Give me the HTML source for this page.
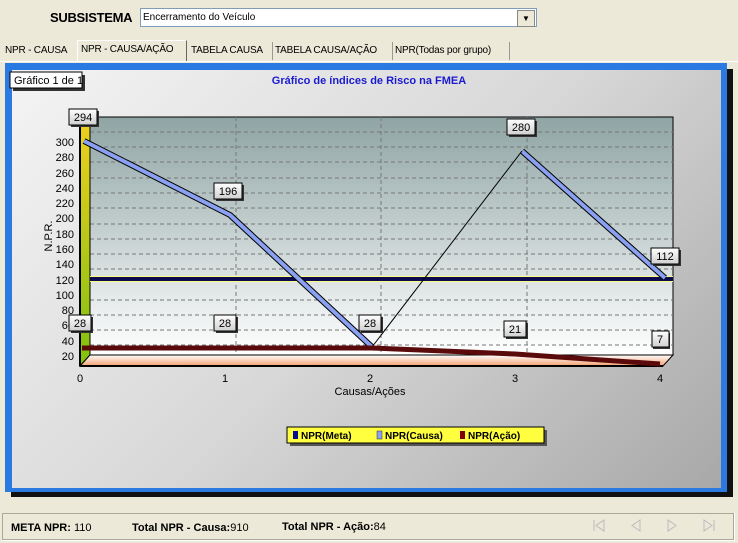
<!DOCTYPE html>
<html><head><meta charset="utf-8"><style>
body{margin:0;width:738px;height:543px;background:#ece9d8;font-family:"Liberation Sans",sans-serif;overflow:hidden;position:relative}
.a{position:absolute}
.tab{position:absolute;top:42px;height:18px;font-size:10px;line-height:18px;padding:0 3px;border-right:1px solid #999;color:#000;white-space:nowrap;overflow:hidden;letter-spacing:-0.2px}
</style></head><body>
<div class="a" style="left:50px;top:10px;font-weight:bold;font-size:13px;letter-spacing:-0.3px">SUBSISTEMA</div>
<div class="a" style="left:140px;top:8px;width:393px;height:17px;background:#fff;border:1px solid #7f9db9;font-size:10px;line-height:17px;padding-left:2px">Encerramento do Veículo</div>
<div class="a" style="left:517px;top:10px;width:16px;height:15px;background:#ece9d8;border:1px solid #888;font-size:8px;text-align:center;line-height:15px">▼</div>
<div class="tab" style="left:2px;width:66px;border:none">NPR - CAUSA</div>
<div class="tab" style="left:77px;top:40px;width:102px;background:#ece9d8;border:1px solid #fff;border-right:1px solid #666;border-bottom:none;height:21px">NPR - CAUSA/AÇÃO</div>
<div class="tab" style="left:188px;width:78px">TABELA CAUSA</div>
<div class="tab" style="left:272px;width:114px">TABELA CAUSA/AÇÃO</div>
<div class="tab" style="left:392px;width:111px">NPR(Todas por grupo)</div>
<div class="a" style="left:0;top:61px;width:738px;height:1px;background:#fff"></div>
<div class="a" style="left:11px;top:69px;width:722px;height:428px;background:#111"></div>
<div class="a" style="left:5px;top:63px;width:722px;height:429px;background:#2a7ae2"></div>
<div class="a" style="left:12px;top:70px;width:709px;height:418px;background:linear-gradient(135deg,#f4f4f4,#d8d8d8 50%,#a8a8a8)"></div>
<svg class="a" style="left:0;top:0" width="738" height="543" font-family="Liberation Sans,sans-serif">
<defs>
<linearGradient id="bw" x1="0" y1="0" x2="0" y2="1"><stop offset="0" stop-color="#8fa4a4"/><stop offset="1" stop-color="#fff"/></linearGradient>
<linearGradient id="fl" x1="0" y1="0" x2="0" y2="1"><stop offset="0" stop-color="#fff"/><stop offset="1" stop-color="#f4a070"/></linearGradient>
<linearGradient id="lw" x1="0" y1="0" x2="0" y2="1"><stop offset="0" stop-color="#f0d020"/><stop offset="1" stop-color="#80c010"/></linearGradient>
<linearGradient id="lb" x1="0" y1="0" x2="0" y2="1"><stop offset="0" stop-color="#fff"/><stop offset="1" stop-color="#d0d0d0"/></linearGradient>
</defs>
<text x="369" y="84" fill="#1a1ad0" font-size="11" font-weight="bold" text-anchor="middle">Gráfico de índices de Risco na FMEA</text>
<rect x="13" y="75" width="72" height="16" fill="#333"/>
<rect x="10" y="72" width="72" height="16" fill="#fff" stroke="#000"/>
<text x="14" y="84" font-size="11">Gráfico 1 de 1</text>
<rect x="90" y="117" width="583" height="238" fill="url(#bw)" stroke="#000"/>
<g stroke="#777" stroke-dasharray="4,3" stroke-width="1">
<line x1="90" y1="132" x2="673" y2="132"/><line x1="90" y1="147" x2="673" y2="147"/><line x1="90" y1="162" x2="673" y2="162"/><line x1="90" y1="178" x2="673" y2="178"/><line x1="90" y1="193" x2="673" y2="193"/><line x1="90" y1="208" x2="673" y2="208"/><line x1="90" y1="224" x2="673" y2="224"/><line x1="90" y1="239" x2="673" y2="239"/><line x1="90" y1="254" x2="673" y2="254"/><line x1="90" y1="269" x2="673" y2="269"/><line x1="90" y1="300" x2="673" y2="300"/><line x1="90" y1="315" x2="673" y2="315"/><line x1="90" y1="330" x2="673" y2="330"/><line x1="90" y1="345" x2="673" y2="345"/>
<line x1="236" y1="117" x2="236" y2="355"/><line x1="381" y1="117" x2="381" y2="355"/><line x1="527" y1="117" x2="527" y2="355"/>
</g>
<polygon points="80,127 90,117 90,355 80,366" fill="url(#lw)" stroke="#000"/>
<polygon points="80,366 90,355 673,355 663,366" fill="url(#fl)" stroke="#000"/>
<line x1="80" y1="366" x2="663" y2="366" stroke="#000" stroke-width="2"/>
<line x1="80" y1="127" x2="80" y2="366" stroke="#000" stroke-width="2"/>
<g font-size="11" text-anchor="end">
<text x="74" y="146">300</text><text x="74" y="161">280</text><text x="74" y="177">260</text><text x="74" y="192">240</text><text x="74" y="207">220</text><text x="74" y="222">200</text><text x="74" y="238">180</text><text x="74" y="253">160</text><text x="74" y="268">140</text><text x="74" y="284">120</text><text x="74" y="299">100</text><text x="74" y="314">80</text><text x="74" y="329">60</text><text x="74" y="345">40</text><text x="74" y="360">20</text>
</g>
<text x="52" y="236" font-size="11" transform="rotate(-90 52 236)" text-anchor="middle">N.P.R.</text>
<g font-size="11" text-anchor="middle"><text x="80" y="382">0</text><text x="225" y="382">1</text><text x="370" y="382">2</text><text x="515" y="382">3</text><text x="660" y="382">4</text><text x="370" y="395">Causas/Ações</text></g>
<line x1="90" y1="279" x2="673" y2="279" stroke="#ffff80" stroke-width="6"/>
<line x1="90" y1="279" x2="673" y2="279" stroke="#0a0a50" stroke-width="4"/>
<g fill="none" stroke-linejoin="bevel">
<polyline points="84,141 230,215 372,347" stroke="#000" stroke-width="6"/>
<polyline points="84,141 230,215 372,347" stroke="#8aa0f0" stroke-width="4"/>
<polyline points="522,151 665,278" stroke="#000" stroke-width="6"/>
<polyline points="522,151 665,278" stroke="#8aa0f0" stroke-width="4"/>
</g>
<line x1="372" y1="347" x2="522" y2="151" stroke="#000" stroke-width="1"/>
<polyline points="82,348 372,348 515,354 660,364" fill="none" stroke="#5a0a0a" stroke-width="5"/>
<g font-size="11" text-anchor="middle">
<g transform="translate(84,119)"><rect x="-13" y="-8" width="28" height="16" fill="#333"/><rect x="-15" y="-10" width="28" height="16" fill="url(#lb)" stroke="#000"/><text x="-1" y="2">294</text></g>
<g transform="translate(229,193)"><rect x="-13" y="-8" width="28" height="16" fill="#333"/><rect x="-15" y="-10" width="28" height="16" fill="url(#lb)" stroke="#000"/><text x="-1" y="2">196</text></g>
<g transform="translate(522,129)"><rect x="-13" y="-8" width="28" height="16" fill="#333"/><rect x="-15" y="-10" width="28" height="16" fill="url(#lb)" stroke="#000"/><text x="-1" y="2">280</text></g>
<g transform="translate(666,258)"><rect x="-13" y="-8" width="28" height="16" fill="#333"/><rect x="-15" y="-10" width="28" height="16" fill="url(#lb)" stroke="#000"/><text x="-1" y="2">112</text></g>
<g transform="translate(81,325)"><rect x="-10" y="-8" width="22" height="16" fill="#333"/><rect x="-12" y="-10" width="22" height="16" fill="url(#lb)" stroke="#000"/><text x="-1" y="2">28</text></g>
<g transform="translate(226,325)"><rect x="-10" y="-8" width="22" height="16" fill="#333"/><rect x="-12" y="-10" width="22" height="16" fill="url(#lb)" stroke="#000"/><text x="-1" y="2">28</text></g>
<g transform="translate(371,325)"><rect x="-10" y="-8" width="22" height="16" fill="#333"/><rect x="-12" y="-10" width="22" height="16" fill="url(#lb)" stroke="#000"/><text x="-1" y="2">28</text></g>
<g transform="translate(516,331)"><rect x="-10" y="-8" width="22" height="16" fill="#333"/><rect x="-12" y="-10" width="22" height="16" fill="url(#lb)" stroke="#000"/><text x="-1" y="2">21</text></g>
<g transform="translate(661,341)"><rect x="-8" y="-8" width="17" height="16" fill="#333"/><rect x="-9" y="-10" width="17" height="16" fill="url(#lb)" stroke="#000"/><text x="-1" y="2">7</text></g>
</g>
<rect x="290" y="430" width="257" height="16" fill="#555"/>
<rect x="287" y="427" width="257" height="16" fill="#ffff40" stroke="#000"/>
<g font-size="10" font-weight="bold"><rect x="293" y="431" width="5" height="8" fill="#0a0a90"/><text x="301" y="439">NPR(Meta)</text>
<rect x="377" y="431" width="5" height="8" fill="#8aa0f0" stroke="#333" stroke-width=".5"/><text x="385" y="439">NPR(Causa)</text>
<rect x="460" y="431" width="5" height="8" fill="#800000"/><text x="468" y="439">NPR(Ação)</text></g>
<rect x="2.5" y="513.5" width="732" height="27" fill="none" stroke="#fff"/>
<rect x="2.5" y="513.5" width="731" height="26" fill="none" stroke="#aca899"/>
<g font-size="11"><text x="11" y="531"><tspan font-weight="bold">META NPR:</tspan> 110</text>
<text x="132" y="531"><tspan font-weight="bold">Total NPR - Causa:</tspan>910</text>
<text x="282" y="530"><tspan font-weight="bold">Total NPR - Ação:</tspan>84</text></g>
<g fill="none" stroke="#bbb"><path d="M594 520v11M604 520l-8 5.5 8 5.5z"/><path d="M640 520l-8 5.5 8 5.5z"/><path d="M668 520l8 5.5-8 5.5z"/><path d="M704 520l8 5.5-8 5.5zM714 520v11"/></g>
</svg>
</body></html>
